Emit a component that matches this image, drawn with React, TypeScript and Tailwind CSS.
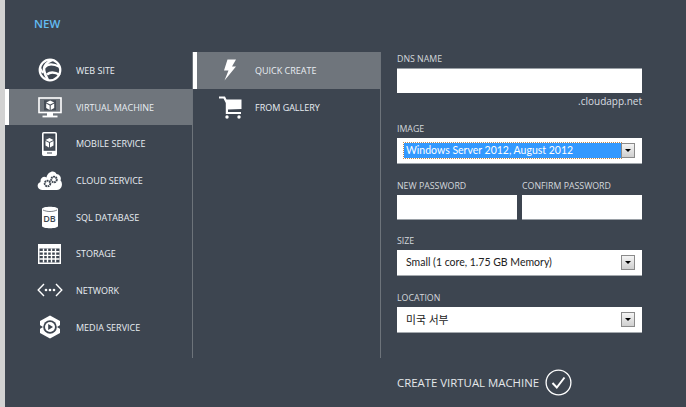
import React from "react";

const font = { fontFamily: '"Open Sans", "Noto Sans", "Noto Sans CJK KR", sans-serif' };

const Cube = ({ x, y, s = 1 }: { x: number; y: number; s?: number }) => (
  <g transform={`translate(${x} ${y}) scale(${s})`}>
    <path d="M0 2 L4 0 L8 2 L4 4 Z" fill="#fff" />
    <path d="M0 3 L3.5 4.8 L3.5 9.4 L0 7.4 Z M8 3 L4.5 4.8 L4.5 9.4 L8 7.4 Z" fill="#fff" />
  </g>
);

const Icons: Record<string, React.ReactNode> = {
  web: (
    <svg width="24" height="24" viewBox="0 0 24 24">
      <circle cx="12" cy="12" r="10.3" fill="none" stroke="#fff" strokeWidth="2.2" />
      <path d="M14 2 C9 4 6 8 6 11 C6 15 8 18 10 22" fill="none" stroke="#fff" strokeWidth="2.6" />
      <path d="M6.5 9.5 C10 5 16 6 22 9" fill="none" stroke="#fff" strokeWidth="2.2" />
      <path d="M9 16.5 C13 13 17 14 22 17" fill="none" stroke="#fff" strokeWidth="2.6" />
      <path d="M2 10 L5 15" stroke="#fff" strokeWidth="2" />
    </svg>
  ),
  vm: (
    <svg width="24" height="21" viewBox="0 0 24 21">
      <rect x="1" y="1" width="22" height="14.5" fill="none" stroke="#fff" strokeWidth="1.6" />
      <rect x="6" y="3.2" width="12" height="10.2" fill="#454c56" />
      <rect x="9" y="15.5" width="6" height="3.5" fill="#fff" />
      <rect x="4.5" y="18.6" width="15" height="1.8" fill="#fff" />
      <Cube x={8.2} y={3.6} />
    </svg>
  ),
  mobile: (
    <svg width="15" height="24" viewBox="0 0 15 24">
      <rect x="0.8" y="0.8" width="13.4" height="22.4" rx="1" fill="none" stroke="#fff" strokeWidth="1.6" />
      <rect x="0.8" y="18.8" width="13.4" height="4.4" fill="#fff" />
      <rect x="5" y="20.5" width="5" height="1" fill="#3d4550" />
      <rect x="3" y="4" width="9" height="13.5" fill="#49505a" />
      <Cube x={3.5} y={6} />
    </svg>
  ),
  cloud: (
    <svg width="25" height="21" viewBox="0 0 25 21">
      <path d="M5 20 C0 20 -1 13.5 3.5 12 C3 7 7.5 5.5 9.5 7.5 C10.5 1 18 -0.5 19.5 4 C23.5 4.5 24.5 8 23.5 10.5 C26 12.5 25.5 20 20 20 Z" fill="#fff" />
      <circle cx="10.5" cy="13.5" r="2.8" fill="none" stroke="#3d4550" strokeWidth="1.9" strokeDasharray="1.8 0.6" />
      <circle cx="17" cy="9.5" r="2.8" fill="none" stroke="#3d4550" strokeWidth="1.9" strokeDasharray="1.8 0.6" />
    </svg>
  ),
  sql: (
    <svg width="18" height="23" viewBox="0 0 18 23">
      <path d="M1 3 C1 0 17 0 17 3 L17 20 C17 23 1 23 1 20 Z" fill="#fff" />
      <path d="M2 4 C6 6 12 6 16 4" fill="none" stroke="#3d4550" strokeWidth="0.7" />
    </svg>
  ),
  storage: (
    <svg width="23" height="20" viewBox="0 0 23 20">
      <rect x="0" y="0" width="23" height="20" fill="#fff" />
      <rect x="1.5" y="4.5" width="20" height="14" fill="#3d4550" />
      <path d="M1.5 7.8 H21.5 M1.5 11.4 H21.5 M1.5 15 H21.5 M5.5 4.5 V18.5 M9.5 4.5 V18.5 M13.5 4.5 V18.5 M17.5 4.5 V18.5" stroke="#fff" strokeWidth="1.4" />
    </svg>
  ),
  network: (
    <svg width="26" height="14" viewBox="0 0 26 14">
      <path d="M7 1 L1.2 7 L7 13 M19 1 L24.8 7 L19 13" fill="none" stroke="#fff" strokeWidth="1.4" />
      <circle cx="9" cy="7" r="1.3" fill="#fff" />
      <circle cx="13" cy="7" r="1.3" fill="#fff" />
      <circle cx="17" cy="7" r="1.3" fill="#fff" />
    </svg>
  ),
  media: (
    <svg width="22" height="24" viewBox="0 0 22 24">
      <path d="M11 0.5 L21 6 L21 18 L11 23.5 L1 18 L1 6 Z" fill="#fff" />
      <circle cx="11" cy="12" r="6.8" fill="#3d4550" />
      <circle cx="11" cy="12" r="5" fill="#fff" />
      <path d="M9.2 9 L14 12 L9.2 15 Z" fill="#3d4550" />
      <path d="M0 9.5 L4 12 L0 14.5 Z M22 9.5 L18 12 L22 14.5 Z" fill="#3d4550" />
    </svg>
  ),
  bolt: (
    <svg width="14" height="22" viewBox="0 0 14 22">
      <path d="M4.5 0.5 L13 0.5 L9 7.5 L13 7.5 L1.5 21.5 L5.5 11.5 L1 11.5 Z" fill="#fff" />
    </svg>
  ),
  cart: (
    <svg width="23" height="23" viewBox="0 0 23 23">
      <path d="M0 0.5 H6 L7.5 3.5 H22.5 V13 L9 13.5 V16 H22 V18 H6.8 V7 L4.5 2.5 H0 Z" fill="#fff" />
      <circle cx="8" cy="21" r="1.7" fill="#fff" />
      <circle cx="20" cy="21" r="1.7" fill="#fff" />
    </svg>
  ),
};

function Item({ icon, label, active, dbText, second }: { icon: string; label: string; active?: boolean; dbText?: boolean; second?: boolean }) {
  return (
    <div className={`relative flex items-center h-[36.7px] ${active ? "bg-[#6f757c] border-l-4 border-white" : "border-l-4 border-transparent"}`}>
      <div className={`relative flex justify-center items-center shrink-0 ${second ? "w-[58px] pl-[8px]" : "w-[67px] pl-[14px]"}`}>
        {Icons[icon]}
        {dbText && (
          <span className="absolute inset-0 pl-[14px] flex items-center justify-center pt-[3px] text-[9px] font-semibold text-[#3d4550]">DB</span>
        )}
      </div>
      <span className="text-[9px] leading-[12px] pt-[1px] font-medium text-[#e8edf2] whitespace-nowrap">{label}</span>
    </div>
  );
}

const Label = ({ children }: { children: React.ReactNode }) => (
  <div className="text-[8.8px] leading-[12px] text-[#d4d8dc] whitespace-nowrap h-[12px] mb-[3px]">{children}</div>
);

const Arrow = () => (
  <div className="w-[14px] h-[15px] border border-[#8a8a8a] bg-gradient-to-b from-[#f4f4f4] to-[#cfcfcf] flex items-center justify-center shrink-0">
    <div className="w-0 h-0 border-x-[3.5px] border-x-transparent border-t-[3.5px] border-t-black" />
  </div>
);

const Select = ({ text, selected, korean }: { text: string; selected?: boolean; korean?: boolean }) => (
  <div className="h-[26px] bg-white border-b border-[#a4a9ae] flex items-center pl-[7px] pr-[7px]">
    <div className={`flex-1 flex items-center h-[15px] pl-[2px] pt-[1px] whitespace-nowrap font-['Lato','Noto_Sans_CJK_KR',sans-serif] ${korean ? "text-[10.8px]" : "text-[10.5px]"} ${selected ? "bg-[#3399ff] text-white outline-1 outline-dotted outline-[#c08a50]" : "text-[#222]"}`}>
      {text}
    </div>
    <Arrow />
  </div>
);

export default function App() {
  return (
    <div className="flex h-[407px] w-[686px] overflow-hidden bg-[#3d4550]" style={font}>
      <div className="w-[5px] bg-[#d2d2d2] shrink-0" />
      <div className="flex-1 flex flex-col">
        <div className="h-[52px] pl-[29px] pt-[16px] text-[11.5px] leading-[16px] font-semibold text-[#62bcf2]">NEW</div>
        <div className="flex">
          <div className="w-[188px] h-[306px] border-r border-[#6d737a]">
            <Item icon="web" label="WEB SITE" />
            <Item icon="vm" label="VIRTUAL MACHINE" active />
            <Item icon="mobile" label="MOBILE SERVICE" />
            <Item icon="cloud" label="CLOUD SERVICE" />
            <Item icon="sql" label="SQL DATABASE" dbText />
            <Item icon="storage" label="STORAGE" />
            <Item icon="network" label="NETWORK" />
            <Item icon="media" label="MEDIA SERVICE" />
          </div>
          <div className="w-[188px] h-[306px] border-r border-[#6d737a]">
            <Item icon="bolt" label="QUICK CREATE" active second />
            <Item icon="cart" label="FROM GALLERY" second />
          </div>
          <div className="w-[245px] ml-[16px] pt-[1px]">
            <Label>DNS NAME</Label>
            <div className="h-[25px] bg-white border-t border-[#9aa0a6]" />
            <div className="text-right text-[10px] leading-[16px] h-[30px] text-[#d9dde0]">.cloudapp.net</div>
            <Label>IMAGE</Label>
            <Select text="Windows Server 2012, August 2012" selected />
            <div className="h-[16px]" />
            <div className="flex gap-[5px]">
              <div className="w-[120px]">
                <Label>NEW PASSWORD</Label>
                <div className="h-[25px] bg-white border-b border-[#9aa0a6]" />
              </div>
              <div className="w-[120px]">
                <Label>CONFIRM PASSWORD</Label>
                <div className="h-[25px] bg-white border-b border-[#9aa0a6]" />
              </div>
            </div>
            <div className="h-[15px]" />
            <Label>SIZE</Label>
            <Select text="Small (1 core, 1.75 GB Memory)" />
            <div className="h-[16px]" />
            <Label>LOCATION</Label>
            <Select text="미국 서부" korean />
            <div className="flex items-center mt-[36px]">
              <span className="text-[11.4px] text-[#e4e7ea] whitespace-nowrap">CREATE VIRTUAL MACHINE</span>
              <svg className="ml-[6px]" width="27" height="27" viewBox="0 0 27 27">
                <circle cx="13.5" cy="13.5" r="12.4" fill="none" stroke="#fff" strokeWidth="1.3" />
                <path d="M7.5 14 L11.8 18.5 L19.5 8.5" fill="none" stroke="#fff" strokeWidth="2" />
              </svg>
            </div>
          </div>
        </div>
      </div>
    </div>
  );
}
